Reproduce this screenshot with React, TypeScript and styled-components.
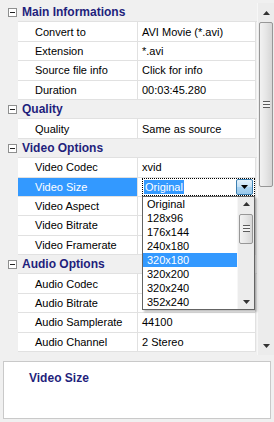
import React from 'react';
import styled, { createGlobalStyle } from 'styled-components';

const GlobalStyle = createGlobalStyle`
  html, body {
    margin: 0;
    padding: 0;
    background: #f0f0f0;
  }
  body {
    font-family: "Liberation Sans", Arial, sans-serif;
    font-size: 11px;
    color: #000;
  }
`;

const ROW_H = 19.4;
const NAVY = '#1f1f7c';
const LINE = '#e1e1e1';

interface Prop {
  name: string;
  value?: string;
  selected?: boolean;
  combo?: boolean;
}

interface Category {
  title: string;
  props: Prop[];
}

const categories: Category[] = [
  {
    title: 'Main Informations',
    props: [
      { name: 'Convert to', value: 'AVI Movie (*.avi)' },
      { name: 'Extension', value: '*.avi' },
      { name: 'Source file info', value: 'Click for info' },
      { name: 'Duration', value: '00:03:45.280' },
    ],
  },
  {
    title: 'Quality',
    props: [{ name: 'Quality', value: 'Same as source' }],
  },
  {
    title: 'Video Options',
    props: [
      { name: 'Video Codec', value: 'xvid' },
      { name: 'Video Size', selected: true, combo: true },
      { name: 'Video Aspect' },
      { name: 'Video Bitrate' },
      { name: 'Video Framerate' },
    ],
  },
  {
    title: 'Audio Options',
    props: [
      { name: 'Audio Codec' },
      { name: 'Audio Bitrate' },
      { name: 'Audio Samplerate', value: '44100' },
      { name: 'Audio Channel', value: '2 Stereo' },
    ],
  },
];

const sizes = ['Original', '128x96', '176x144', '240x180', '320x180', '320x200', '320x240', '352x240'];

const Window = styled.div`
  width: 274px;
  height: 422px;
  display: flex;
  flex-direction: column;
  background: #f0f0f0;
  overflow: hidden;
`;

const GridArea = styled.div`
  display: flex;
  height: 352px;
  margin-top: 3px;
`;

const Grid = styled.div`
  flex: 1;
  display: flex;
  flex-direction: column;
`;

const Row = styled.div`
  height: ${ROW_H}px;
  display: flex;
  flex-shrink: 0;
`;

const Gutter = styled.div`
  width: 18px;
  flex-shrink: 0;
  display: flex;
  align-items: center;
  padding-left: 8px;
  box-sizing: border-box;
`;

const Expander = styled.div`
  width: 9px;
  height: 9px;
  box-sizing: border-box;
  border: 1px solid #8e8f8f;
  background: #fff;
  display: flex;
  align-items: center;
  justify-content: center;

  &::after {
    content: '';
    width: 5px;
    height: 1px;
    background: #222;
  }
`;

const CategoryBody = styled.div`
  flex: 1;
  display: flex;
  align-items: center;
  padding-left: 4px;
  border-bottom: 1px solid ${LINE};
  font-weight: bold;
  font-size: 12px;
  color: ${NAVY};
`;

const PropBody = styled.div`
  flex: 1;
  display: flex;
  background: #fff;
  border-bottom: 1px solid ${LINE};
  border-right: 1px solid ${LINE};
  margin-right: 1px;
`;

const NameCell = styled.div<{ $selected?: boolean }>`
  width: 120px;
  flex-shrink: 0;
  box-sizing: border-box;
  display: flex;
  align-items: center;
  padding-left: 17px;
  border-right: 1px solid ${LINE};
  background: ${({ $selected }) => ($selected ? '#3399ff' : '#fff')};
  color: ${({ $selected }) => ($selected ? '#fff' : '#000')};
  white-space: nowrap;
`;

const ValueCell = styled.div`
  flex: 1;
  position: relative;
  display: flex;
  align-items: center;
  padding-left: 4px;
  white-space: nowrap;
`;

const Combo = styled.div`
  position: absolute;
  inset: 0 0 0 4px;
  border: 1px dotted #000;
  display: flex;
  align-items: center;
  justify-content: space-between;
  padding: 0 1px 0 1px;
`;

const ComboText = styled.span`
  background: #3399ff;
  color: #fff;
  padding: 1px 1px;
  line-height: 12px;
`;

const DropButton = styled.div`
  width: 17px;
  height: 16px;
  box-sizing: border-box;
  border: 1px solid #3c7fb1;
  border-radius: 2px;
  background: linear-gradient(#e3f1fb, #c4e1f6 50%, #a9d3f1 51%, #99c9ec);
  display: flex;
  align-items: center;
  justify-content: center;
`;

const DropList = styled.div`
  position: absolute;
  top: 100%;
  left: 4px;
  right: 0;
  height: 114px;
  box-sizing: border-box;
  border: 1px solid #646464;
  background: #fff;
  display: flex;
  z-index: 10;
  box-shadow: 2px 2px 2px rgba(0, 0, 0, 0.25);
`;

const ListItems = styled.div`
  flex: 1;
  display: flex;
  flex-direction: column;
`;

const ListItem = styled.div<{ $active?: boolean }>`
  height: 14px;
  line-height: 14px;
  padding-left: 4px;
  background: ${({ $active }) => ($active ? '#3399ff' : 'transparent')};
  color: ${({ $active }) => ($active ? '#fff' : '#000')};
`;

const ScrollBar = styled.div<{ $w: number }>`
  width: ${({ $w }) => $w}px;
  flex-shrink: 0;
  display: flex;
  flex-direction: column;
  background: #ececec;
  border-left: 1px solid #f7f7f7;
  box-sizing: border-box;
`;

const ArrowBox = styled.div<{ $h: number }>`
  height: ${({ $h }) => $h}px;
  flex-shrink: 0;
  display: flex;
  align-items: center;
  justify-content: center;
`;

const Track = styled.div`
  flex: 1;
  display: flex;
  flex-direction: column;
`;

const Thumb = styled.div<{ $top: number; $h: number }>`
  margin: ${({ $top }) => $top}px 1px 0 1px;
  height: ${({ $h }) => $h}px;
  box-sizing: border-box;
  border: 1px solid #979797;
  border-radius: 2px;
  background: linear-gradient(90deg, #f2f2f2, #e6e6e6 50%, #d6d6d6);
  display: flex;
  align-items: center;
  justify-content: center;
`;

const Grip = styled.div`
  width: 7px;
  height: 7px;
  background: repeating-linear-gradient(
    #5c5c5c 0,
    #5c5c5c 1px,
    #f4f4f4 1px,
    #f4f4f4 3px
  );
`;

const HelpPanel = styled.div`
  margin: 6px 3px 0 3px;
  height: 58px;
  box-sizing: border-box;
  border: 1px solid #c9c9c9;
  background: #fff;
  padding: 9px 0 0 25px;
  font-weight: bold;
  font-size: 12px;
  color: ${NAVY};
`;

const Triangle: React.FC<{ down?: boolean; color?: string }> = ({ down, color = '#000' }) => (
  <svg width="7" height="4" viewBox="0 0 7 4">
    <polygon points={down ? '0,0 7,0 3.5,4' : '3.5,0 7,4 0,4'} fill={color} />
  </svg>
);

const VScroll: React.FC<{ width: number; arrow: number; top: number; thumb: number }> = ({
  width,
  arrow,
  top,
  thumb,
}) => (
  <ScrollBar $w={width}>
    <ArrowBox $h={arrow}>
      <Triangle color="#333" />
    </ArrowBox>
    <Track>
      <Thumb $top={top} $h={thumb}>
        <Grip />
      </Thumb>
    </Track>
    <ArrowBox $h={arrow}>
      <Triangle down color="#333" />
    </ArrowBox>
  </ScrollBar>
);

const SizeCombo: React.FC = () => (
  <>
    <Combo>
      <ComboText>Original</ComboText>
      <DropButton>
        <Triangle down />
      </DropButton>
    </Combo>
    <DropList>
      <ListItems>
        {sizes.map((s) => (
          <ListItem key={s} $active={s === '320x180'}>
            {s}
          </ListItem>
        ))}
      </ListItems>
      <VScroll width={17} arrow={14} top={3} thumb={30} />
    </DropList>
  </>
);

export default function App() {
  return (
    <Window>
      <GlobalStyle />
      <GridArea>
        <Grid>
          {categories.map((cat) => (
            <React.Fragment key={cat.title}>
              <Row>
                <Gutter>
                  <Expander />
                </Gutter>
                <CategoryBody>{cat.title}</CategoryBody>
              </Row>
              {cat.props.map((p) => (
                <Row key={p.name}>
                  <Gutter />
                  <PropBody>
                    <NameCell $selected={p.selected}>{p.name}</NameCell>
                    <ValueCell>{p.combo ? <SizeCombo /> : p.value}</ValueCell>
                  </PropBody>
                </Row>
              ))}
            </React.Fragment>
          ))}
        </Grid>
        <VScroll width={17} arrow={19} top={0} thumb={165} />
      </GridArea>
      <HelpPanel>Video Size</HelpPanel>
    </Window>
  );
}
